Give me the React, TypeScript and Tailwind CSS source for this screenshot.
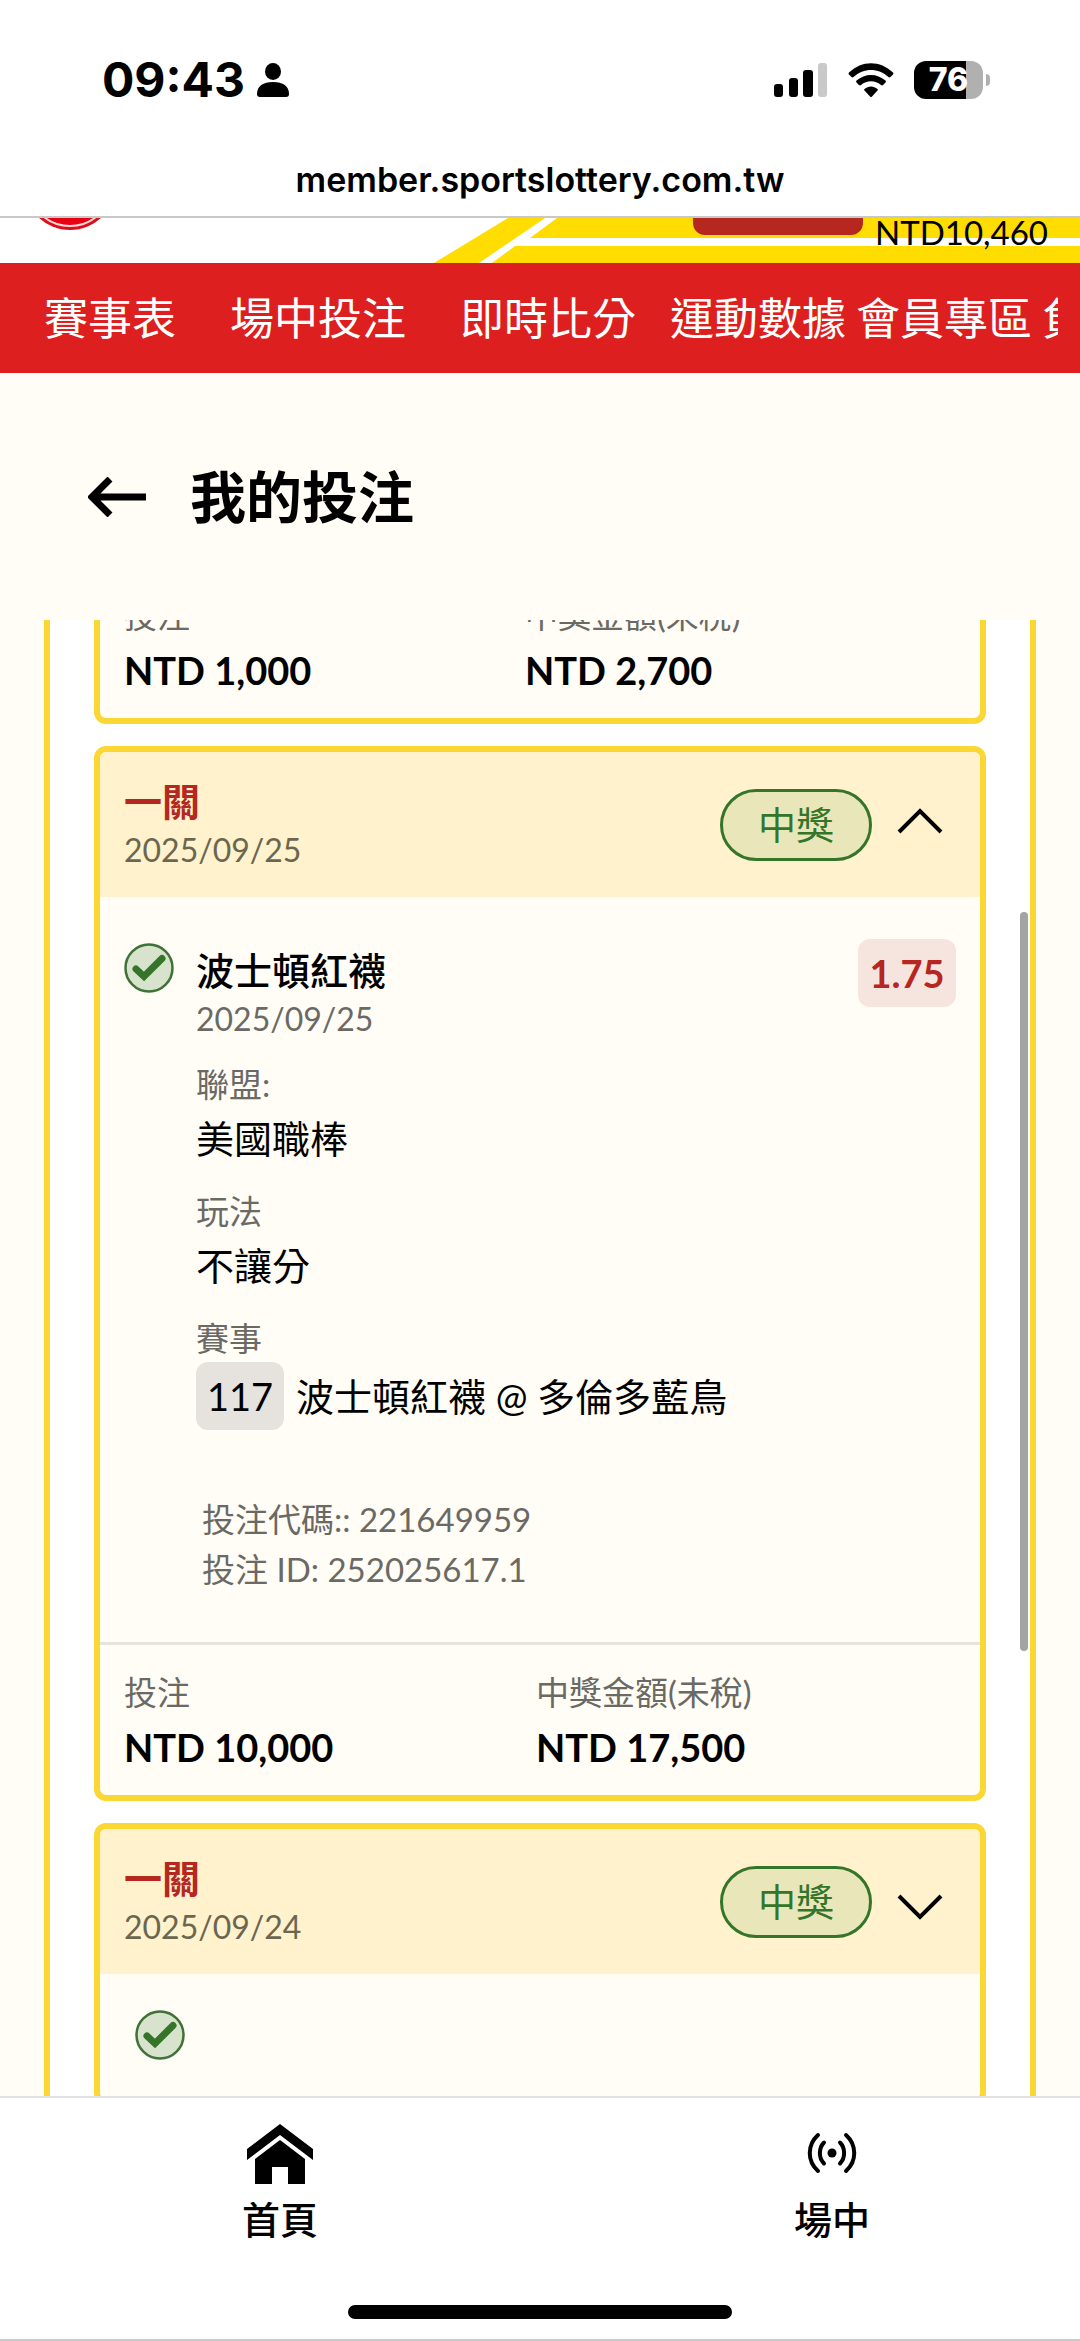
import React, { useState } from 'react';

type Bet = {
    id: string;
    date: string;
    stake: string;
    payout: string;
    odds?: string;
    team?: string;
    league?: string;
    play?: string;
    matchNo?: string;
    match?: string;
    code?: string;
    betId?: string;
};

const navItems = ['賽事表', '場中投注', '即時比分', '運動數據', '會員專區', '負責任博彩'];

const bets: Bet[] = [
    {
        id: 'b1',
        date: '2025/09/25',
        stake: 'NTD 10,000',
        payout: 'NTD 17,500',
        odds: '1.75',
        team: '波士頓紅襪',
        league: '美國職棒',
        play: '不讓分',
        matchNo: '117',
        match: '波士頓紅襪 @ 多倫多藍鳥',
        code: '221649959',
        betId: '252025617.1',
    },
    {
        id: 'b2',
        date: '2025/09/24',
        stake: '',
        payout: '',
    },
];

const StatusBar: React.FC = () => (
    <div className="h-[142px] shrink-0 flex items-end justify-between pl-[102px] pr-[90px] pb-[34px] font-['Inter',sans-serif]">
        <div className="flex items-center gap-3">
            <span className="text-[48px] leading-[56px] font-bold">09:43</span>
            <svg className="w-8 h-[34px]" viewBox="0 0 32 34" fill="black">
                <ellipse cx="16" cy="8.5" rx="8" ry="8.5" />
                <path d="M0 31c0-8 6-12 16-12s16 4 16 12c0 2-1 3-3 3H3c-2 0-3-1-3-3z" />
            </svg>
        </div>
        <div className="flex items-center h-14 gap-5">
            <svg className="w-[54px] h-[34px]" viewBox="0 0 54 34">
                <rect x="0" y="21" width="9" height="13" rx="3" />
                <rect x="15" y="15" width="9" height="19" rx="3" />
                <rect x="29" y="7" width="10" height="27" rx="3" />
                <rect x="44" y="0" width="9" height="34" rx="3" fill="#c9c9c9" />
            </svg>
            <svg className="w-[46px] h-[34px]" viewBox="0 0 46 34">
                <path d="M1 9.500C14-3 32-3 45 9.500a1.500 1.500 0 0 1 0 2l-2.500 2.500a1.500 1.500 0 0 1-2 0c-10-9.500-25-9.500-35 0a1.500 1.500 0 0 1-2 0L1 11.500a1.500 1.500 0 0 1 0-2z" />
                <path d="M8.500 17.500c8.500-7.500 20.500-7.500 29 0a1.500 1.500 0 0 1 0 2L35 22a1.500 1.500 0 0 1-2 0c-6-5-14-5-20 0a1.500 1.500 0 0 1-2 0l-2.500-2.500a1.500 1.500 0 0 1 0-2z" />
                <path d="M16.500 26c4-3.500 9-3.500 13 0a1 1 0 0 1 0 1.500l-5.500 6a1.300 1.300 0 0 1-2 0l-5.500-6a1 1 0 0 1 0-1.500z" />
            </svg>
            <div className="flex items-center gap-[3px]">
                <div className="w-[69px] h-[38px] rounded-xl bg-linear-to-r from-black from-75% to-[#b0b0b0] to-75% text-white text-[32px] leading-[38px] font-extrabold text-center">
                    76
                </div>
                <div className="w-1 h-3 rounded-r-full bg-[#b0b0b0]" />
            </div>
        </div>
    </div>
);

const SiteHeader: React.FC = () => (
    <header>
        <div className="relative h-[45px] flex justify-between items-start overflow-hidden bg-white">
            <svg className="absolute right-0 top-0 w-[646px] h-[45px]" viewBox="0 0 646 45">
                <path d="M0 45L74 0h37L45 45z" fill="#ffdd00" />
                <path d="M123 0h523v20H96z" fill="#ffdd00" />
                <path d="M81 28h565v17H58z" fill="#ffdd00" />
            </svg>
            <svg className="ml-[37px] w-[66px] h-3" viewBox="0 0 66 12">
                <circle cx="33" cy="-34" r="46" fill="#d9101c" />
                <circle cx="33" cy="-34" r="42" fill="#e60012" stroke="#ffd9d9" strokeWidth="2" />
            </svg>
            <div className="relative flex items-start gap-3 pr-8">
                <div className="w-[170px] h-[17px] rounded-b-xl bg-[#b5271f]" />
                <span className="text-[33px] leading-7">NTD10,460</span>
            </div>
        </div>
        <nav className="h-[110px] bg-[#dd1f1f] pl-11 pr-[22px]">
            <div className="h-full flex items-center overflow-hidden text-white text-[44px] leading-[60px] whitespace-nowrap">
                {navItems.map((item, i) => (
                    <a key={item} href="#" className={i < 2 ? 'mr-[54px]' : i === 2 ? 'mr-[34px]' : 'mr-[10px]'}>
                        {item}
                    </a>
                ))}
            </div>
        </nav>
    </header>
);

const CheckBadge: React.FC = () => (
    <svg className="w-[50px] h-[50px] shrink-0" viewBox="0 0 50 50">
        <circle cx="25" cy="25" r="23.500" fill="#d7e3cd" stroke="#3f7236" strokeWidth="2.500" />
        <path d="M12 26l8 7.500 18-18" fill="none" stroke="#34752a" strokeWidth="7" strokeLinecap="round" />
    </svg>
);

const Totals: React.FC<{ stake: string; payout: string; wide?: boolean }> = ({ stake, payout, wide }) => (
    <dl className="flex px-6 py-5">
        <div className={wide ? 'w-[412px]' : 'w-[401px]'}>
            <dt className="text-[33px] leading-[54px] text-[#6b6964]">投注</dt>
            <dd className="text-[38px] leading-[56px] font-bold">{stake}</dd>
        </div>
        <div>
            <dt className="text-[33px] leading-[54px] text-[#6b6964]">中獎金額(未稅)</dt>
            <dd className="text-[38px] leading-[56px] font-bold">{payout}</dd>
        </div>
    </dl>
);

const Field: React.FC<{ label: string; children: React.ReactNode }> = ({ label, children }) => (
    <div>
        <dt className="text-[33px] leading-[47px] text-[#6b6964]">{label}</dt>
        <dd className="text-[38px] leading-[60px]">{children}</dd>
    </div>
);

const BetCard: React.FC<{ bet: Bet; open: boolean; onToggle: () => void }> = ({ bet, open, onToggle }) => (
    <article className="border-[6px] border-[#fad732] rounded-xl bg-[#fffdf6] overflow-hidden">
        <div className="h-[145px] flex items-center justify-between bg-[#fff2cc] pl-6 pr-9">
            <div>
                <h2 className="text-[38px] leading-[50px] font-bold text-[#b5271f]">一關</h2>
                <p className="text-[32px] leading-[48px] text-[#6b6650]">{bet.date}</p>
            </div>
            <div className="flex items-center gap-6">
                <span className="w-[152px] h-[72px] flex items-center justify-center rounded-full border-[3px] border-[#34752a] bg-[#e9e7ba] text-[38px] text-[#34752a]">
                    中獎
                </span>
                <button type="button" onClick={onToggle} aria-expanded={open} aria-label={bet.date}>
                    <svg className="w-12 h-12" viewBox="0 0 48 48" fill="none" stroke="black" strokeWidth="4">
                        {open ? <path d="M3 31l21-21 21 21" /> : <path d="M3 18l21 21 21-21" />}
                    </svg>
                </button>
            </div>
        </div>
        {open ? (
            <>
                <div className="flex items-start px-6 pt-[42px]">
                    <div className="mt-1">
                        <CheckBadge />
                    </div>
                    <div className="ml-[22px] flex-1">
                        <h3 className="text-[38px] leading-[62px] font-medium">{bet.team}</h3>
                        <p className="text-[32px] leading-9 text-[#6b6964]">{bet.date}</p>
                        <dl className="flex flex-col gap-5 pt-6">
                            <Field label="聯盟:">{bet.league}</Field>
                            <Field label="玩法">{bet.play}</Field>
                            <Field label="賽事">
                                <span className="inline-flex items-center gap-3">
                                    <span className="w-[88px] h-[68px] flex items-center justify-center rounded-xl bg-[#e6e3de]">
                                        {bet.matchNo}
                                    </span>
                                    {bet.match}
                                </span>
                            </Field>
                        </dl>
                        <div className="pl-[6px] pt-16 pb-12 text-[33px] leading-[50px] text-[#6b6964]">
                            <p>投注代碼:: {bet.code}</p>
                            <p>投注 ID: {bet.betId}</p>
                        </div>
                    </div>
                    <span className="w-[98px] h-[68px] flex items-center justify-center rounded-xl bg-[#f6e5df] text-[38px] font-bold text-[#b5271f]">
                        {bet.odds}
                    </span>
                </div>
                <hr className="border-t-[3px] border-[#e6e3de]" />
                <Totals stake={bet.stake} payout={bet.payout} wide />
            </>
        ) : (
            <>
                <div className="pl-[35px] py-9">
                    <CheckBadge />
                </div>
                <hr className="border-t-[3px] border-[#e6e3de]" />
            </>
        )}
    </article>
);

const HomeIcon: React.FC = () => (
    <svg className="w-[66px] h-[60px]" viewBox="0 0 66 60">
        <path d="M33 0l33 25v11L33 11 0 36V25z" />
        <path d="M33 16l25 19v25H41V43H25v17H8V35z" />
    </svg>
);

const LiveIcon: React.FC = () => (
    <svg className="w-[52px] h-[42px]" viewBox="0 0 52 42" fill="none" stroke="black" strokeWidth="4" strokeLinecap="round">
        <circle cx="26" cy="21" r="4.500" fill="black" stroke="none" />
        <path d="M12 3C1 13 1 29 12 39M18 10.500C12.500 16 12.500 26 18 31.500M40 3c11 10 11 26 0 36M34 10.500c5.500 5.500 5.500 15.500 0 21" />
    </svg>
);

const TabBar: React.FC = () => (
    <nav className="h-[209px] shrink-0 flex justify-between px-[180px] pt-[26px] border-t-2 border-[#e2e2e0] bg-white text-[38px] leading-[54px] font-medium">
        <a href="#" className="w-[200px] flex flex-col items-center">
            <span className="h-[68px] flex items-start"><HomeIcon /></span>
            首頁
        </a>
        <a href="#" className="w-[136px] flex flex-col items-center">
            <span className="h-[68px] flex items-start pt-2"><LiveIcon /></span>
            場中
        </a>
    </nav>
);

const App: React.FC = () => {
    const [openId, setOpenId] = useState('b1');

    return (
        <div className="h-screen flex flex-col bg-white text-black font-['Lato','Noto_Sans_CJK_TC',sans-serif]">
            <StatusBar />
            <div className="h-[76px] shrink-0 flex items-center justify-center border-b-2 border-[#c8c8c8] text-[34px] font-semibold font-['Inter',sans-serif]">
                member.sportslottery.com.tw
            </div>
            <SiteHeader />
            <main className="flex-1 min-h-0 flex flex-col bg-[#fffdf6]">
                <div className="h-[247px] shrink-0 flex items-center gap-11 pl-[88px]">
                    <button type="button" aria-label="返回">
                        <svg className="w-[58px] h-10" viewBox="0 0 58 40" fill="none" stroke="black" strokeWidth="7">
                            <path d="M58 20H5M22 2L4 20l18 18" />
                        </svg>
                    </button>
                    <h1 className="text-[56px] leading-[72px] font-bold">我的投注</h1>
                </div>
                <div className="relative flex-1 min-h-0 overflow-hidden mx-11 px-11 border-x-[6px] border-[#fad732] bg-white flex flex-col">
                    <section className="shrink-0 flex flex-col gap-[22px] -mt-[58px]">
                        <article className="border-[6px] border-[#fad732] rounded-xl bg-[#fffdf6]">
                            <Totals stake="NTD 1,000" payout="NTD 2,700" />
                        </article>
                        {bets.map((bet) => (
                            <BetCard
                                key={bet.id}
                                bet={bet}
                                open={openId === bet.id}
                                onToggle={() => setOpenId(openId === bet.id ? '' : bet.id)}
                            />
                        ))}
                    </section>
                    <div className="absolute right-[2px] top-[292px] w-2 h-[739px] rounded-full bg-[#a3a3a3]" />
                </div>
            </main>
            <TabBar />
            <div className="shrink-0 flex justify-center pb-5 border-b-2 border-[#c8c8c8] bg-white">
                <div className="w-[384px] h-[14px] rounded-full bg-black" />
            </div>
        </div>
    );
};

export default App;
